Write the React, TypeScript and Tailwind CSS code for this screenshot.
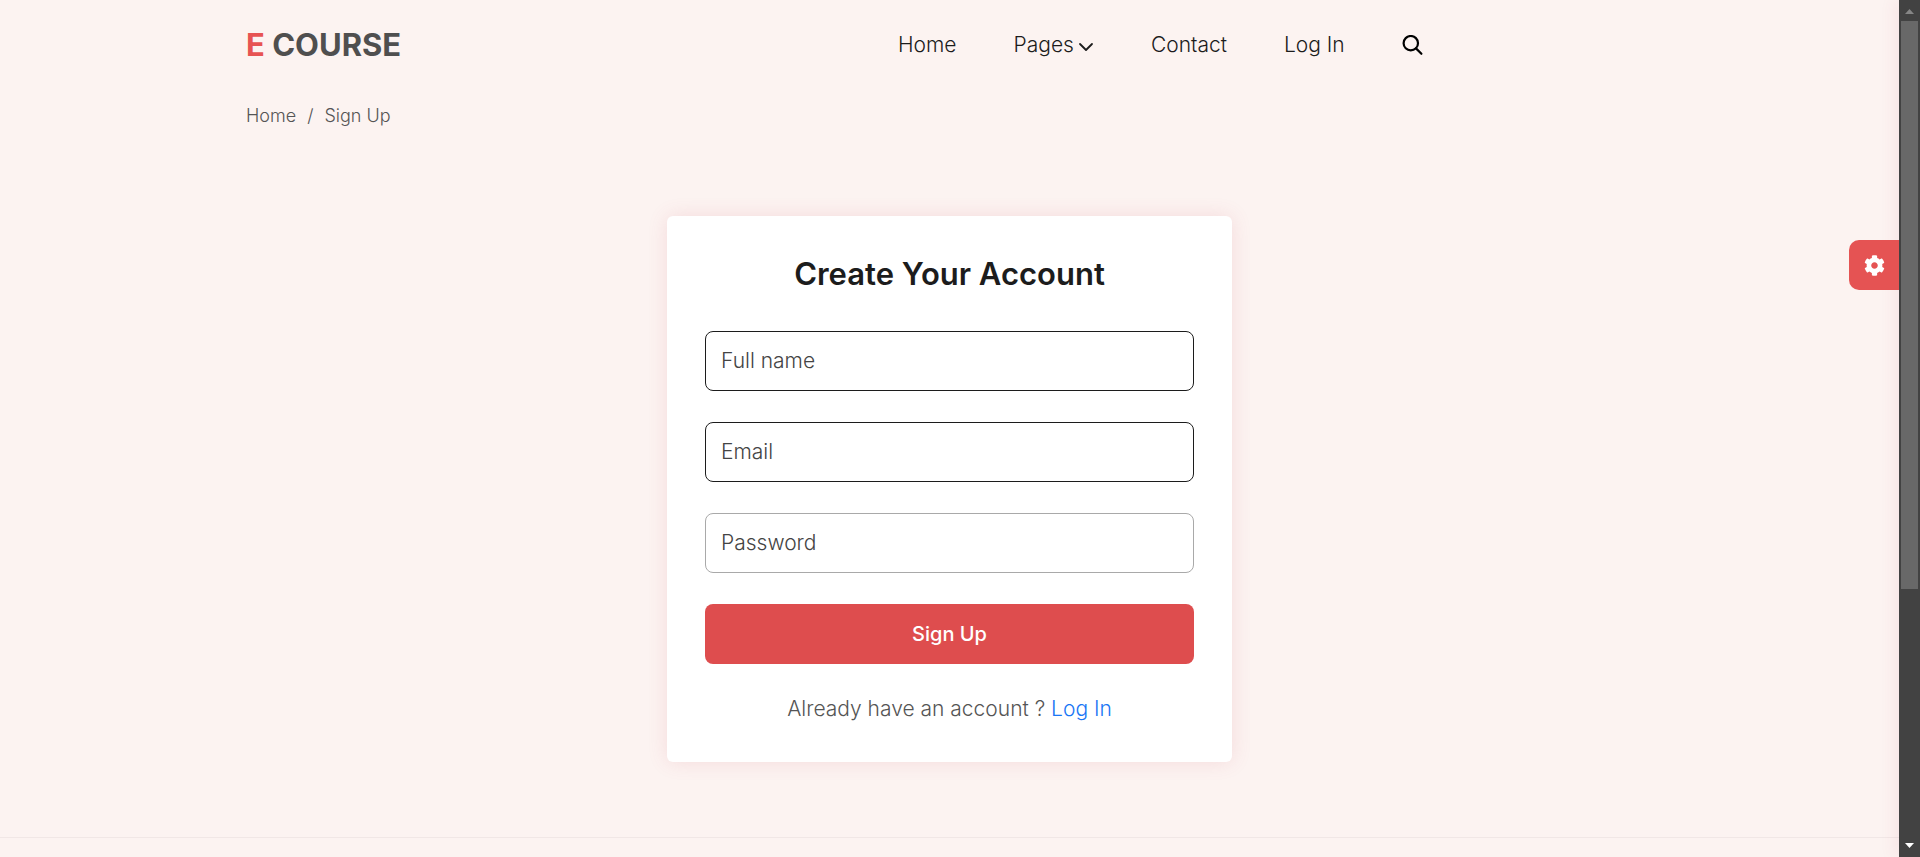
import React from 'react';
import { FaCog } from 'react-icons/fa';

type FieldProps = { id: string; label: string; type: string; border: string };

function Field({ id, label, type, border }: FieldProps) {
  return (
    <div className="relative">
      <input
        id={id}
        type={type}
        className={`peer block h-[60px] w-full rounded-lg border bg-white px-4 text-[21px] text-[#1c1c1c] outline-none ${border}`}
      />
      <label
        htmlFor={id}
        className="pointer-events-none absolute inset-y-0 left-4 flex items-center text-[21px] font-light text-[#444444] peer-focus:hidden"
      >
        {label}
      </label>
    </div>
  );
}

function Header() {
  return (
    <header className="flex items-center pt-5">
      <a href="#" className="w-[652px] text-[31px] leading-[50px] font-bold text-[#4f4f4f]">
        <span className="text-[#e75353]">E</span> COURSE
      </a>
      <nav className="flex items-center gap-[57px] text-[21px] leading-8 font-light text-[#1c1c1c]">
        <a href="#">Home</a>
        <a href="#" className="flex items-center gap-1">
          Pages
          <svg width="16" height="16" viewBox="0 0 16 16" fill="none" stroke="currentColor" strokeWidth="1.8" strokeLinecap="round" strokeLinejoin="round" className="mt-1">
            <path d="M2 5l6 6 6-6" />
          </svg>
        </a>
        <a href="#">Contact</a>
        <a href="#">Log In</a>
        <button type="button" aria-label="Search" className="text-black">
          <svg width="21" height="21" viewBox="0 0 21 21" fill="none" stroke="currentColor" strokeWidth="2.2" strokeLinecap="round">
            <circle cx="8.8" cy="8.2" r="7.2" />
            <path d="M14 13.400l5.400 5.400" />
          </svg>
        </button>
      </nav>
    </header>
  );
}

function Scrollbar() {
  return (
    <div aria-hidden="true" className="sticky top-0 flex h-screen w-[21px] shrink-0 flex-col items-center bg-[#424242]">
      <svg width="21" height="21" viewBox="0 0 21 21" className="shrink-0">
        <path d="M6 14h9l-4.500-5z" fill="#868686" />
      </svg>
      <div className="flex w-full grow flex-col px-0.5">
        <div className="h-[69.7%] bg-[#686868]" />
      </div>
      <svg width="21" height="21" viewBox="0 0 21 21" className="shrink-0">
        <path d="M6 7h9l-4.500 5z" fill="#ffffff" />
      </svg>
    </div>
  );
}

export default function App() {
  return (
    <div className="flex min-h-screen bg-[#fcf3f1] font-['Inter','Liberation_Sans',sans-serif]">
      <div className="relative min-w-0 grow overflow-hidden">
        <div className="mx-auto max-w-[1407px]">
          <Header />
          <nav aria-label="Breadcrumb" className="mt-8 flex gap-[11px] text-lg leading-7 font-light text-[#555555]">
            <a href="#">Home</a>
            <span>/</span>
            <span>Sign Up</span>
          </nav>
        </div>

        <main className="mt-[86px] mb-[75px] flex justify-center">
          <form className="w-full max-w-[565px] rounded-md bg-white px-[38px] pt-[38px] pb-[39px] shadow-[0_0_20px_rgba(200,80,100,0.14)]">
            <h1 className="text-center text-[31px] leading-10 font-semibold text-[#1c1c1c]">Create Your Account</h1>
            <div className="mt-[37px] flex flex-col gap-[31px]">
              <Field id="name" label="Full name" type="text" border="border-[#1c1c1c]" />
              <Field id="email" label="Email" type="email" border="border-[#1c1c1c]" />
              <Field id="password" label="Password" type="password" border="border-[#a9a9a9]" />
              <button type="button" className="h-[60px] rounded-lg bg-[#de4d4e] text-xl font-medium text-white">
                Sign Up
              </button>
              <p className="text-center text-[21px] leading-7 font-light text-[#555555]">
                Already have an account ?{' '}
                <a href="#" className="text-[#1a76f5]">Log In</a>
              </p>
            </div>
          </form>
        </main>

        <footer className="h-5 border-t border-[#f1e7e6]" />

        <div className="absolute inset-y-0 -right-1 w-1 shadow-[0_0_16px_rgba(200,60,90,0.25)]" />
        <button
          type="button"
          aria-label="Settings"
          className="absolute top-60 right-0 flex size-[50px] items-center justify-center rounded-l-[10px] bg-[#e55353] text-white"
        >
          <FaCog size={21} />
        </button>
      </div>
      <Scrollbar />
    </div>
  );
}
